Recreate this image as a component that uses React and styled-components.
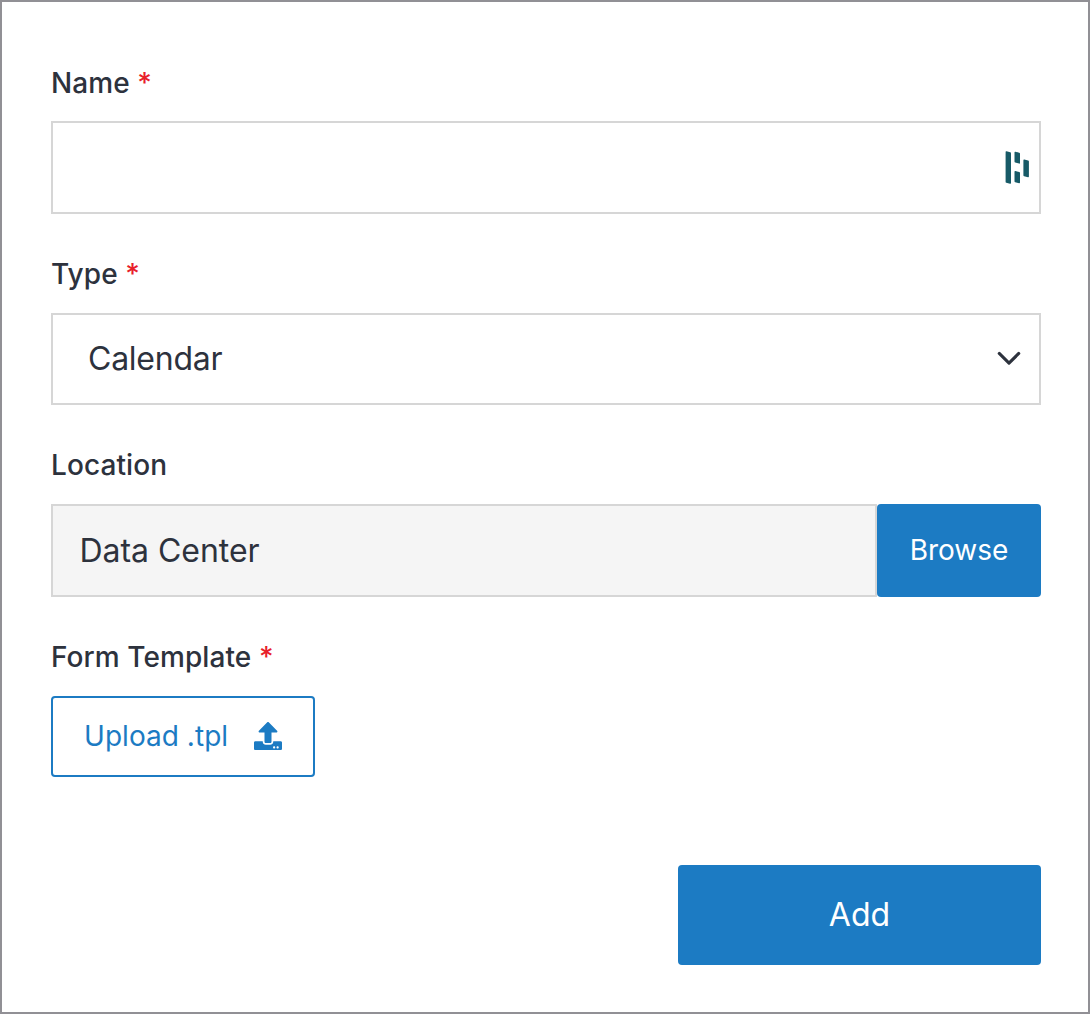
import React from "react";
import styled, { createGlobalStyle } from "styled-components";
import { FaUpload } from "react-icons/fa";

const blue = "#1c7bc3";
const ink = "#2d323d";
const line = "#d6d6d6";

const GlobalStyle = createGlobalStyle`
  *, *::before, *::after { box-sizing: border-box; }
  body {
    margin: 0;
    background: #fff;
    color: ${ink};
    font-family: Inter, "Liberation Sans", sans-serif;
  }
  button { font-family: inherit; cursor: pointer; }
`;

const Form = styled.form`
  display: flex;
  flex-direction: column;
  width: 100%;
  height: 100vh;
  padding: 64px 47px 0 49px;
  border: 2px solid #919095;
`;

const Field = styled.div`
  display: flex;
  flex-direction: column;
  align-items: ${(p) => (p.$hug ? "flex-start" : "stretch")};
  gap: ${(p) => p.$gap || 22}px;
  margin-bottom: 43px;
`;

const Label = styled.label`
  height: 34px;
  font-size: 28px;
  font-weight: 500;
  line-height: 34px;
  letter-spacing: 0.08px;
`;

const Required = styled.span`
  color: #e8202a;
`;

const InputBox = styled.div`
  display: flex;
  align-items: center;
  height: 93px;
  padding-right: 9px;
  border: 2px solid ${line};
`;

const TextInput = styled.input`
  flex: 1;
  min-width: 0;
  height: 100%;
  padding: 0 27px;
  border: 0;
  outline: 0;
  background: transparent;
  color: inherit;
  font: 400 32px Inter, "Liberation Sans", sans-serif;
`;

const SelectBox = styled.div`
  display: flex;
  align-items: center;
  justify-content: space-between;
  height: 92px;
  padding: 0 17px 0 35px;
  border: 2px solid ${line};
  font-size: 32px;
  line-height: 40px;
  letter-spacing: -0.24px;
`;

const Group = styled.div`
  display: flex;
  height: 93px;
`;

const ReadOnlyValue = styled.div`
  display: flex;
  flex: 1;
  align-items: center;
  padding-left: 26.5px;
  border: 2px solid ${line};
  background: #f5f5f5;
  font-size: 32px;
  line-height: 39px;
  letter-spacing: -0.04px;
`;

const Button = styled.button`
  display: flex;
  align-items: center;
  justify-content: center;
  padding: 0;
  border: 0;
  border-radius: 4px;
  background: ${blue};
  color: #fff;
  font-weight: 400;
`;

const BrowseButton = styled(Button)`
  width: 164px;
  height: 93px;
  font-size: 28px;
  line-height: 33px;
`;

const UploadButton = styled(Button)`
  justify-content: space-between;
  width: 264px;
  height: 81px;
  padding: 0 31px;
  border: 2px solid ${blue};
  background: #fff;
  color: ${blue};
  font-size: 28px;
  line-height: 33px;
  letter-spacing: 0.04px;

  svg { margin-bottom: 1px; }
`;

const Actions = styled.div`
  display: flex;
  justify-content: flex-end;
  margin-top: 45px;
`;

const AddButton = styled(Button)`
  width: 363px;
  height: 100px;
  font-size: 32px;
  line-height: 38px;
`;

function DashMark() {
  return (
    <svg width="25" height="35" viewBox="0 -0.5 25 35" fill="#175a67" aria-hidden="true">
      <path d="M.6 1.4Q.6.6 1.5.8L5.2 1.7Q6 1.9 6 2.7V32.4Q6 33.4 5.1 33.2L1.3 32.2Q.6 32 .6 31.2Z" />
      <path d="M9.5 2Q9.5 1 10.4 1.2L14.2 2.2Q15 2.4 15 3.2V12.4Q15 13.3 14.1 13.1L10.2 12.1Q9.5 11.9 9.5 11.1Z" />
      <path d="M9.5 21.3Q9.5 20.4 10.4 20.6L14.2 21.6Q15 21.8 15 22.6V32Q15 33 14.1 32.8L10.2 31.8Q9.5 31.6 9.5 30.8Z" />
      <path d="M18.4 9.7Q18.4 8.8 19.3 9L23.1 10Q23.9 10.2 23.9 11V26.1Q23.9 27 23 26.8L19.1 25.8Q18.4 25.6 18.4 24.8Z" />
    </svg>
  );
}

function Chevron() {
  return (
    <svg width="26" height="26" viewBox="0 0 16 16" fill="none" aria-hidden="true">
      <path d="M2 4.6l6 5.9 6-5.9" stroke={ink} strokeWidth="1.9" strokeLinecap="round" strokeLinejoin="round" />
    </svg>
  );
}

export default function App() {
  return (
    <>
      <GlobalStyle />
      <Form onSubmit={(e) => e.preventDefault()}>
        <Field $gap={21}>
          <Label htmlFor="name">
            Name <Required>*</Required>
          </Label>
          <InputBox>
            <TextInput id="name" type="text" />
            <DashMark />
          </InputBox>
        </Field>
        <Field>
          <Label>
            Type <Required>*</Required>
          </Label>
          <SelectBox role="combobox">
            <span>Calendar</span>
            <Chevron />
          </SelectBox>
        </Field>
        <Field>
          <Label>Location</Label>
          <Group>
            <ReadOnlyValue>Data Center</ReadOnlyValue>
            <BrowseButton type="button">Browse</BrowseButton>
          </Group>
        </Field>
        <Field $hug>
          <Label>
            Form Template <Required>*</Required>
          </Label>
          <UploadButton type="button">
            Upload .tpl
            <FaUpload size={28} />
          </UploadButton>
        </Field>
        <Actions>
          <AddButton type="submit">Add</AddButton>
        </Actions>
      </Form>
    </>
  );
}
